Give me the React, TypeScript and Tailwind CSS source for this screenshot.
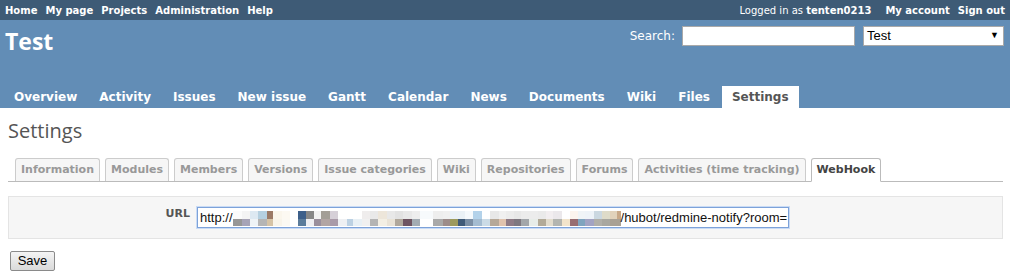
const topLinks = ["Home", "My page", "Projects", "Administration", "Help"];
const mainMenu = ["Overview", "Activity", "Issues", "New issue", "Gantt", "Calendar", "News", "Documents", "Wiki", "Files", "Settings"];
const subTabs = ["Information", "Modules", "Members", "Versions", "Issue categories", "Wiki", "Repositories", "Forums", "Activities (time tracking)", "WebHook"];

// pixelated (redacted) part of the url
const mosaic = [
  { w: "w-[9px]", t: "bg-[#fbfbfb]", b: "bg-[#979797]" },
  { w: "w-[8px]", t: "bg-[#f4f4f4]", b: "bg-[#a6a3b7]" },
  { w: "w-[8px]", t: "bg-[#dde9f2]", b: "bg-[#eef3f6]" },
  { w: "w-[9px]", t: "bg-[#b5d0e0]", b: "bg-[#b5b5b5]" },
  { w: "w-[6px]", t: "bg-[#9b7a66]", b: "bg-[#d5c3a6]" },
  { w: "w-[9px]", t: "bg-[#faf6ec]", b: "bg-[#f8f4ea]" },
  { w: "w-[8px]", t: "bg-[#fcf9f2]", b: "bg-[#fbf9f3]" },
  { w: "w-[8px]", t: "bg-[#ffffff]", b: "bg-[#ffffff]" },
  { w: "w-[8px]", t: "bg-[#3d5f8a]", b: "bg-[#5b7c9b]" },
  { w: "w-[8px]", t: "bg-[#878787]", b: "bg-[#efeff2]" },
  { w: "w-[7px]", t: "bg-[#f2f2f2]", b: "bg-[#9a8f9c]" },
  { w: "w-[9px]", t: "bg-[#a39e96]", b: "bg-[#b2a5a3]" },
  { w: "w-[8px]", t: "bg-[#d6d0d8]", b: "bg-[#a99aa8]" },
  { w: "w-[9px]", t: "bg-[#ffffff]", b: "bg-[#eef0f3]" },
  { w: "w-[6px]", t: "bg-[#ffffff]", b: "bg-[#bcd1e3]" },
  { w: "w-[9px]", t: "bg-[#ffffff]", b: "bg-[#e8f0f5]" },
  { w: "w-[8px]", t: "bg-[#efeded]", b: "bg-[#f0f0f0]" },
  { w: "w-[8px]", t: "bg-[#e9e9e9]", b: "bg-[#b4b4b4]" },
  { w: "w-[9px]", t: "bg-[#ede6da]", b: "bg-[#f3efe4]" },
  { w: "w-[8px]", t: "bg-[#e8e8e8]", b: "bg-[#e9e3d7]" },
  { w: "w-[8px]", t: "bg-[#e2e2e2]", b: "bg-[#b0a89c]" },
  { w: "w-[9px]", t: "bg-[#e8e8e8]", b: "bg-[#6e5461]" },
  { w: "w-[8px]", t: "bg-[#eeeeee]", b: "bg-[#a3acb3]" },
  { w: "w-[13px]", t: "bg-[#f7fafc]", b: "bg-[#ffffff]" },
  { w: "w-[10px]", t: "bg-[#eeeeee]", b: "bg-[#a9a9a9]" },
  { w: "w-[7px]", t: "bg-[#f0f0f0]", b: "bg-[#9c8c8a]" },
  { w: "w-[8px]", t: "bg-[#eaf1f6]", b: "bg-[#9c9a5e]" },
  { w: "w-[7px]", t: "bg-[#eaf1f6]", b: "bg-[#3f5a78]" },
  { w: "w-[8px]", t: "bg-[#f5f9fc]", b: "bg-[#7b8fa5]" },
  { w: "w-[9px]", t: "bg-[#b3d2ea]", b: "bg-[#a4bcd1]" },
  { w: "w-[8px]", t: "bg-[#ffffff]", b: "bg-[#cbdbe6]" },
  { w: "w-[9px]", t: "bg-[#e8e8e8]", b: "bg-[#b6a898]" },
  { w: "w-[7px]", t: "bg-[#f0f0f0]", b: "bg-[#e0c3ae]" },
  { w: "w-[8px]", t: "bg-[#ececec]", b: "bg-[#8f7b86]" },
  { w: "w-[7px]", t: "bg-[#e8e8e8]", b: "bg-[#7e7880]" },
  { w: "w-[8px]", t: "bg-[#ececec]", b: "bg-[#a2a6aa]" },
  { w: "w-[9px]", t: "bg-[#ececec]", b: "bg-[#e7ece8]" },
  { w: "w-[8px]", t: "bg-[#eaeaea]", b: "bg-[#b2aa98]" },
  { w: "w-[7px]", t: "bg-[#f2eef0]", b: "bg-[#e2dccd]" },
  { w: "w-[9px]", t: "bg-[#ebe8eb]", b: "bg-[#b3b5b0]" },
  { w: "w-[8px]", t: "bg-[#ffffff]", b: "bg-[#f2e4cb]" },
  { w: "w-[8px]", t: "bg-[#fcf4ee]", b: "bg-[#976d72]" },
  { w: "w-[7px]", t: "bg-[#f0f4f7]", b: "bg-[#7fa4bf]" },
  { w: "w-[9px]", t: "bg-[#eef3f8]", b: "bg-[#a2a3c3]" },
  { w: "w-[8px]", t: "bg-[#cbd8e1]", b: "bg-[#b0afa9]" },
  { w: "w-[8px]", t: "bg-[#dedbc9]", b: "bg-[#a8a7a0]" },
  { w: "w-[7px]", t: "bg-[#e1d2bb]", b: "bg-[#a9a195]" },
  { w: "w-[4px]", t: "bg-[#c8a888]", b: "bg-[#a9a195]" },
];

export default function App() {
  return (
    <div className="w-[1010px] h-[275px] bg-white font-['DejaVu_Sans',sans-serif] overflow-hidden">
      {/* top menu */}
      <div className="h-[20px] bg-[#3e5b76] flex items-center justify-between px-[5px] text-[10px] text-white">
        <div className="flex font-bold">
          {topLinks.map((l) => (
            <span key={l} className="mr-[8px]">{l}</span>
          ))}
        </div>
        <div className="flex">
          <span className="mr-[14px]">
            Logged in as <b>tenten0213</b>
          </span>
          <span className="font-bold mr-[8px]">My account</span>
          <span className="font-bold">Sign out</span>
        </div>
      </div>

      {/* header */}
      <div className="h-[88px] bg-[#628db6] flex flex-col">
        <div className="flex justify-between pt-[6px]">
          <h1 className="pl-[5px] text-[23px] font-bold text-white font-['Open_Sans',sans-serif] leading-[30px]">Test</h1>
          <div className="flex items-center self-start pr-[6px]">
            <span className="text-[12px] text-white mr-[7px]">Search:</span>
            <div className="w-[173px] h-[20px] bg-white border border-[#a9a9a9] mr-[8px]" />
            <div className="w-[141px] h-[20px] bg-white border border-[#a9a9a9] flex items-center justify-between pl-[3px] pr-[4px] font-['Liberation_Sans',sans-serif] text-[13px] text-black">
              <span>Test</span>
              <span className="text-[9px]">▼</span>
            </div>
          </div>
        </div>
        <div className="flex-1" />
        <div className="flex pl-[4px]">
          {mainMenu.map((m) => (
            <span
              key={m}
              className={
                m === "Settings"
                  ? "px-[10px] py-[4px] mr-[2px] text-[12px] leading-[14px] font-bold bg-white text-[#555]"
                  : "px-[10px] py-[4px] mr-[2px] text-[12px] leading-[14px] font-bold text-white"
              }
            >
              {m}
            </span>
          ))}
        </div>
      </div>

      {/* content */}
      <div className="pl-[8px] pr-[7px]">
        <h2 className="pt-[10px] text-[20px] leading-[26px] text-[#555] font-['Open_Sans',sans-serif]">Settings</h2>

        <div className="mt-[14px] flex items-end pl-[7px] border-b border-[#bbb] h-[24px]">
          {subTabs.map((t) =>
            t === "WebHook" ? (
              <span
                key={t}
                className="mr-[5px] px-[5px] h-[24px] leading-[22px] -mb-px text-[11px] font-bold text-[#444] bg-white border border-[#bbb] border-b-white rounded-t-[3px]"
              >
                {t}
              </span>
            ) : (
              <span
                key={t}
                className="mr-[5px] px-[5px] h-[23px] leading-[21px] text-[11px] font-bold text-[#999] bg-[#f6f6f6] border border-b-0 border-[#ccc] rounded-t-[3px]"
              >
                {t}
              </span>
            )
          )}
        </div>

        <div className="mt-[14px] h-[43px] bg-[#f6f6f6] border border-[#e4e4e4] flex items-center">
          <span className="w-[181px] text-right text-[11px] font-bold text-[#555] -mt-[6px]">URL</span>
          <div className="ml-[7px] w-[592px] h-[21px] bg-white border border-[#7da2d9] shadow-[0_0_0_1px_#c9dbf5] flex items-center pl-[2px] font-['Liberation_Sans',sans-serif] text-[13px] text-[#111]">
            <span>http://</span>
            <div className="flex flex-col mt-[1px]">
              <div className="flex h-[8px]">
                {mosaic.map((c, i) => (
                  <div key={i} className={`${c.w} ${c.t}`} />
                ))}
              </div>
              <div className="flex h-[7px]">
                {mosaic.map((c, i) => (
                  <div key={i} className={`${c.w} ${c.b}`} />
                ))}
              </div>
            </div>
            <span>/hubot/redmine-notify?room=</span>
          </div>
        </div>

        <button className="mt-[12px] ml-[2px] w-[45px] h-[20px] border border-[#8a8a8a] rounded-[2px] bg-gradient-to-b from-[#f4f4f4] to-[#dadada] font-['Liberation_Sans',sans-serif] text-[13px] text-black leading-[18px]">
          Save
        </button>
      </div>
    </div>
  );
}
